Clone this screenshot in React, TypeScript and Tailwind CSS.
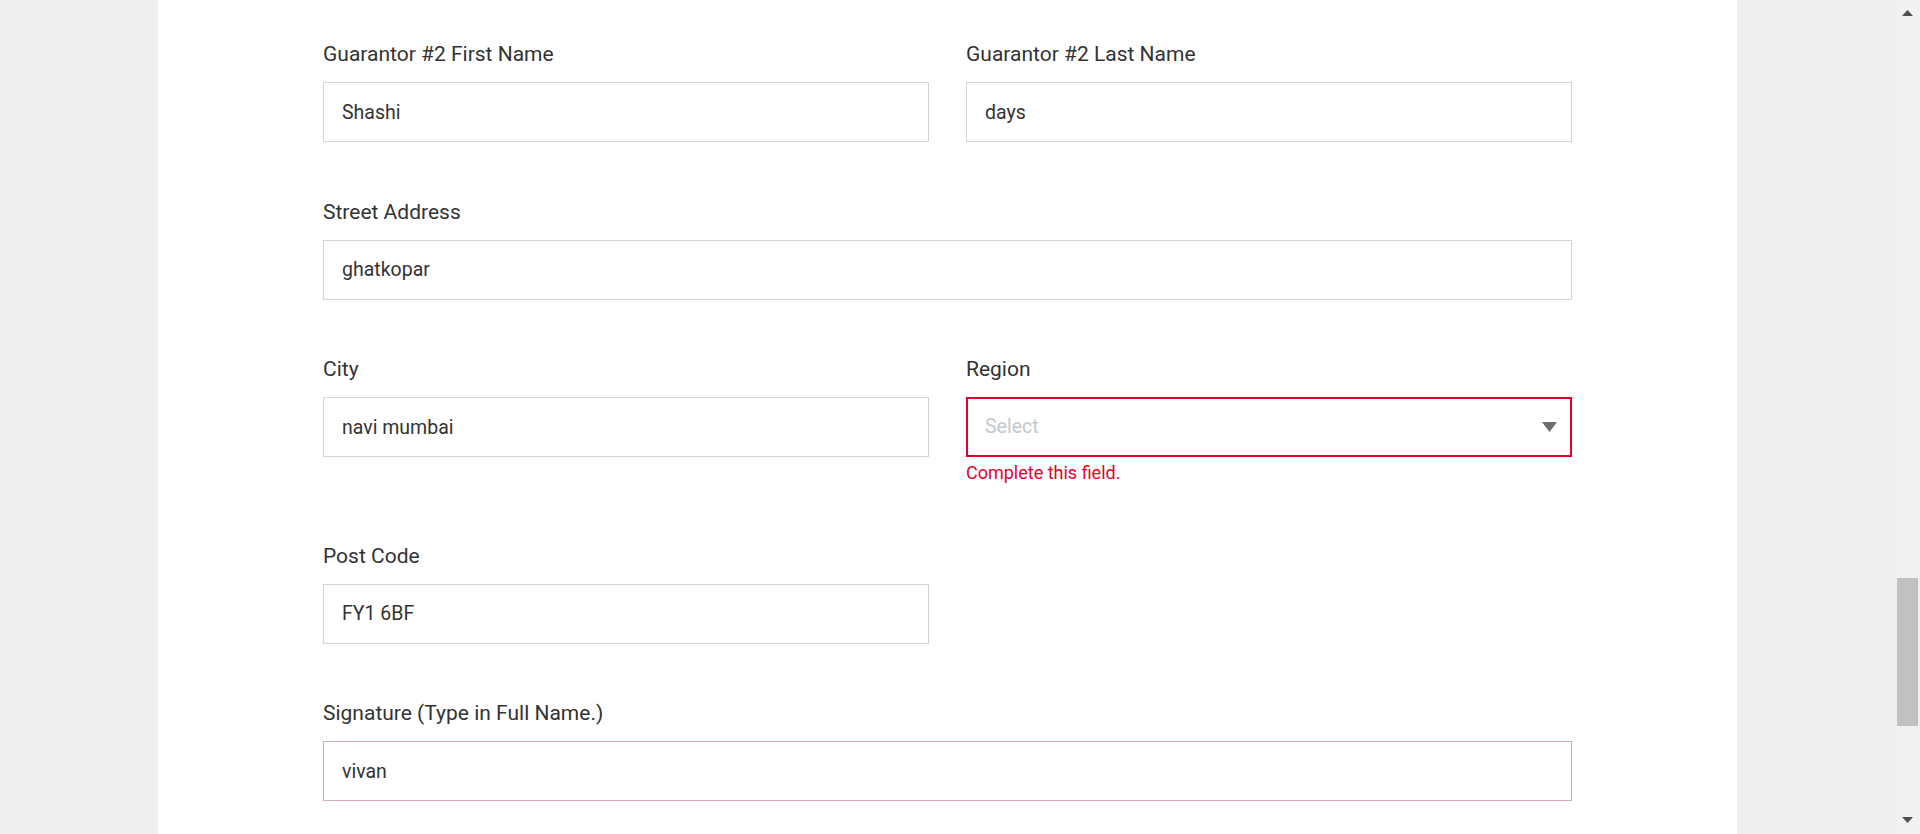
import { useState } from 'react';

type FieldProps = {
    label: string;
    value: string;
    pink?: boolean;
};

function TextField({ label, value, pink }: FieldProps) {
    const [text, setText] = useState(value);

    return (
        <div className="flex flex-col">
            <label className="text-[21px] leading-[25px] text-[#333333] mb-[15px]">{label}</label>
            <input
                type="text"
                value={text}
                onChange={(e) => setText(e.target.value)}
                className={
                    pink
                        ? 'h-[60px] w-full px-[18px] border border-[#d6aab1] bg-white text-[19.5px] text-[#333333] outline-none'
                        : 'h-[60px] w-full px-[18px] border border-[#d3d3d3] bg-white text-[19.5px] text-[#333333] outline-none'
                }
            />
        </div>
    );
}

function RegionSelect() {
    return (
        <div className="flex flex-col">
            <label className="text-[21px] leading-[25px] text-[#333333] mb-[15px]">Region</label>
            <div className="h-[60px] w-full flex items-center justify-between pl-[17px] pr-[13px] border-2 border-[#e4002b] bg-white">
                <span className="text-[19.5px] text-[#c4c8cc]">Select</span>
                <svg width="15" height="10" viewBox="0 0 15 10">
                    <polygon points="0,0 15,0 7.5,10" fill="#6e6e6e" />
                </svg>
            </div>
            <p className="mt-[5px] mb-[2px] text-[18px] leading-[22px] text-[#e4002b]">
                Complete this field.
            </p>
        </div>
    );
}

function Scrollbar() {
    return (
        <div className="w-[25px] h-full bg-[#f1f1f1] flex flex-col items-center">
            <div className="h-[25px] w-full flex items-start justify-center pt-[10px]">
                <svg width="11" height="6" viewBox="0 0 11 6">
                    <polygon points="5.5,0 11,6 0,6" fill="#505050" />
                </svg>
            </div>
            <div className="mt-[553px] h-[148px] w-[21px] bg-[#c1c1c1]" />
            <div className="mt-auto h-[25px] w-full flex items-start justify-center pt-[8px]">
                <svg width="11" height="6" viewBox="0 0 11 6">
                    <polygon points="0,0 11,0 5.5,6" fill="#505050" />
                </svg>
            </div>
        </div>
    );
}

export default function App() {
    return (
        <div className="flex h-[834px] w-full overflow-hidden bg-[#eeeeee] font-['Roboto',sans-serif]">
            <div className="flex-1 h-full flex justify-center">
                <section className="w-[1579px] h-full bg-white px-[165px] pt-[42px]">
                    <div className="grid grid-cols-2 gap-x-[37px] gap-y-[57.5px] items-start">
                        <TextField label="Guarantor #2 First Name" value="Shashi" />
                        <TextField label="Guarantor #2 Last Name" value="days" />

                        <div className="col-span-2">
                            <TextField label="Street Address" value="ghatkopar" />
                        </div>

                        <TextField label="City" value="navi mumbai" />
                        <RegionSelect />

                        <TextField label="Post Code" value="FY1 6BF" />
                        <div />

                        <div className="col-span-2">
                            <TextField label="Signature (Type in Full Name.)" value="vivan" pink />
                        </div>
                    </div>
                </section>
            </div>
            <Scrollbar />
        </div>
    );
}
